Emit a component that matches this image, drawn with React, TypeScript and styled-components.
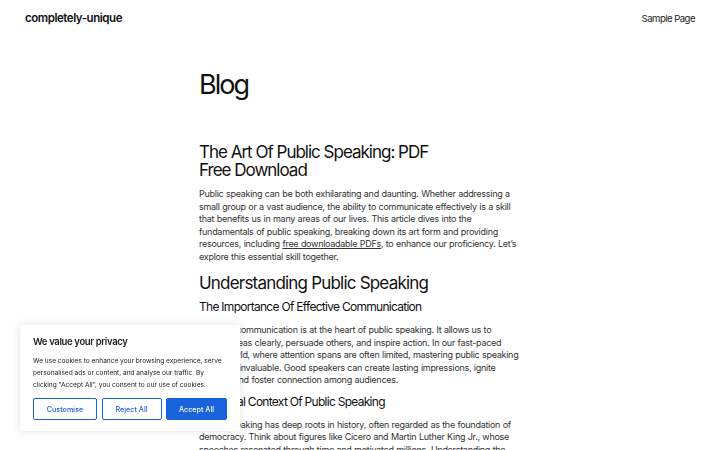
import styled, { createGlobalStyle } from 'styled-components'

const Global = createGlobalStyle`
	html, body {
		margin: 0;
		padding: 0;
		background: #fff;
	}
	body {
		font-family: Inter, 'Noto Sans', sans-serif;
		color: #111;
		overflow: hidden;
	}
`

const Header = styled.header`
	display: flex;
	justify-content: space-between;
	align-items: center;
	height: 36px;
	padding: 0 25px;
`

const SiteTitle = styled.a`
	font-size: 11.5px;
	font-weight: 600;
	letter-spacing: -0.45px;
	color: #111;
	text-decoration: none;
`

const NavLink = styled.a`
	font-size: 9.6px;
	color: #222;
	text-decoration: none;
	letter-spacing: -0.55px;
`

const Main = styled.main`
	display: flex;
	flex-direction: column;
	width: 322px;
	margin: 0 auto;
	padding-top: 33px;
`

const PageTitle = styled.h1`
	margin: 0 0 42px;
	font-size: 27px;
	font-weight: 400;
	line-height: 32px;
	letter-spacing: -2px;
`

const PostTitle = styled.h2`
	margin: 0 0 9px;
	font-size: 17px;
	font-weight: 400;
	line-height: 18px;
	letter-spacing: -1px;
	width: 240px;
`

const SectionTitle = styled.h2`
	margin: 10px 0 0;
	font-size: 17px;
	font-weight: 400;
	line-height: 20px;
	letter-spacing: -0.8px;
`

const SubTitle = styled.h3<{ $top: number }>`
	margin: ${p => p.$top}px 0 10px;
	font-size: 12px;
	font-weight: 400;
	line-height: 15px;
	letter-spacing: -0.72px;
`

const Paragraph = styled.p`
	margin: 0;
	font-size: 9px;
	line-height: 12.5px;
	color: #333;
	letter-spacing: -0.28px;
	word-spacing: 0.3px;

	a {
		color: #333;
	}
`

const Banner = styled.div`
	position: fixed;
	left: 20px;
	top: 325px;
	width: 220px;
	box-sizing: border-box;
	padding: 11px 13px 11px;
	background: #fff;
	box-shadow: 0 0 8px rgba(0, 0, 0, 0.12);
	border-radius: 2px;
`

const BannerTitle = styled.div`
	font-size: 9.5px;
	font-weight: 600;
	color: #212121;
	margin-bottom: 8px;
	letter-spacing: -0.35px;
`

const BannerText = styled.p`
	margin: 0 0 7px;
	font-size: 6.6px;
	line-height: 12px;
	color: #212121;
	letter-spacing: -0.02px;
`

const Buttons = styled.div`
	display: grid;
	grid-template-columns: 64px 60px 61px;
	gap: 4px;
	justify-content: space-between;
`

const Button = styled.button<{ $primary?: boolean }>`
	height: 22px;
	padding: 0;
	font-family: inherit;
	font-size: 7.2px;
	font-weight: 500;
	border-radius: 2px;
	border: 1px solid #1863dc;
	background: ${p => (p.$primary ? '#1863dc' : '#fff')};
	color: ${p => (p.$primary ? '#fff' : '#1863dc')};
`

export default function App() {
	return (
		<>
			<Global />
			<Header>
				<SiteTitle href="#">completely-unique</SiteTitle>
				<NavLink href="#">Sample Page</NavLink>
			</Header>
			<Main>
				<PageTitle>Blog</PageTitle>
				<PostTitle>The Art Of Public Speaking: PDF Free Download</PostTitle>
				<Paragraph>
					Public speaking can be both exhilarating and daunting. Whether addressing a small group or a vast
					audience, the ability to communicate effectively is a skill that benefits us in many areas of our
					lives. This article dives into the fundamentals of public speaking, breaking down its art form and
					providing resources, including <a href="#">free downloadable PDFs</a>, to enhance our proficiency.
					Let’s explore this essential skill together.
				</Paragraph>
				<SectionTitle>Understanding Public Speaking</SectionTitle>
				<SubTitle $top={6}>The Importance Of Effective Communication</SubTitle>
				<Paragraph>
					Effective communication is at the heart of public speaking. It allows us to convey ideas clearly,
					persuade others, and inspire action. In our fast-paced digital world, where attention spans are
					often limited, mastering public speaking becomes invaluable. Good speakers can create lasting
					impressions, ignite change, and foster connection among audiences.
				</Paragraph>
				<SubTitle $top={7}>Historical Context Of Public Speaking</SubTitle>
				<Paragraph>
					Public speaking has deep roots in history, often regarded as the foundation of democracy. Think
					about figures like Cicero and Martin Luther King Jr., whose speeches resonated through time and
					motivated millions. Understanding the evolution of public speaking helps us appreciate its
					significance today.
				</Paragraph>
			</Main>
			<Banner>
				<BannerTitle>We value your privacy</BannerTitle>
				<BannerText>
					We use cookies to enhance your browsing experience, serve personalised ads or content, and analyse
					our traffic. By clicking "Accept All", you consent to our use of cookies.
				</BannerText>
				<Buttons>
					<Button>Customise</Button>
					<Button>Reject All</Button>
					<Button $primary>Accept All</Button>
				</Buttons>
			</Banner>
		</>
	)
}
